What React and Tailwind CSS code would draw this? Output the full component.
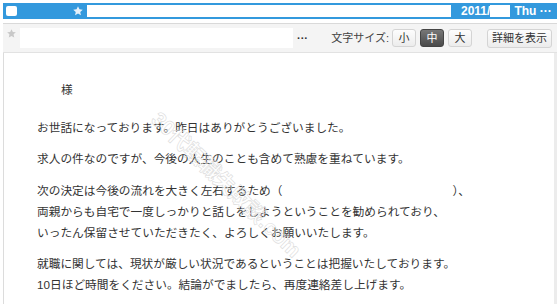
import React from 'react'

const font = { fontFamily: '"Liberation Sans", "Noto Sans CJK JP", sans-serif' }

function Star({ className }) {
  return (
    <svg viewBox="0 0 24 24" className={className} fill="currentColor">
      <path d="M12 2.5l2.9 6.2 6.6.7-5 4.5 1.4 6.6L12 17.2l-5.9 3.3 1.4-6.6-5-4.5 6.6-.7z" />
    </svg>
  )
}

function SizeButton({ label, active }) {
  return (
    <div
      className={
        active
          ? 'w-[24px] h-[18px] flex items-center justify-center rounded-[3px] bg-gradient-to-b from-[#777] to-[#4a4a4a] text-white text-[11px] border border-[#444]'
          : 'w-[24px] h-[18px] flex items-center justify-center rounded-[3px] bg-gradient-to-b from-[#fdfdfd] to-[#ececec] text-[#333] text-[11px] border border-[#d4d4d4]'
      }
    >
      {label}
    </div>
  )
}

function App() {
  const lines = [
    { t: 'お世話になっております。昨日はありがとうございました。', mt: 'mt-[17px]' },
    { t: '求人の件なのですが、今後の人生のことも含めて熟慮を重ねています。', mt: 'mt-[10px]' },
    {
      t: (
        <>
          次の決定は今後の流れを大きく左右するため（<span className="inline-block w-[170px]" />）、
        </>
      ),
      mt: 'mt-[11px]',
    },
    { t: '両親からも自宅で一度しっかりと話しをしようということを勧められており、', mt: '' },
    { t: 'いったん保留させていただきたく、よろしくお願いいたします。', mt: '' },
    { t: '就職に関しては、現状が厳しい状況であるということは把握いたしております。', mt: 'mt-[10px]' },
    { t: '10日ほど時間をください。結論がでましたら、再度連絡差し上げます。', mt: '' },
  ]

  return (
    <div className="w-[560px] h-[304px] bg-white overflow-hidden" style={font}>
      <div className="px-[3px] pt-[3px]">
        {/* selected header row */}
        <div className="h-[16px] bg-[#3399dd] flex items-center whitespace-nowrap">
          <div className="shrink-0 ml-[3px] w-[11px] h-[10px] bg-white rounded-[2px]" />
          <Star className="shrink-0 ml-[55px] w-[12px] h-[12px] text-[#e6f1fa]" />
          <div className="shrink-0 ml-[3px] w-[364px] h-[12px] bg-white" />
          <div className="shrink-0 ml-[10px] text-white text-[12px] font-bold leading-none">2011/</div>
          <div className="shrink-0 w-[20px] h-[12px] bg-white" />
          <div className="shrink-0 ml-[4px] text-white text-[12px] font-bold leading-none">Thu ···</div>
        </div>

        {/* toolbar row */}
        <div className="mt-[4px] border-t border-[#d9d9d9] border-b border-b-[#e2e2e2] bg-[#f4f4f4] h-[30px] flex items-center whitespace-nowrap">
          <div className="w-[17px] h-full flex items-start justify-center pt-[4px]">
            <Star className="w-[11px] h-[11px] text-[#c8c8c8]" />
          </div>
          <div className="w-[273px] h-[20px] bg-white" />
          <div className="ml-[4px] text-[#333] text-[11px] font-bold leading-none">···</div>
          <div className="ml-auto flex items-center">
            <span className="text-[11px] text-[#444] mr-[3px]">文字サイズ:</span>
            <div className="flex gap-[4px]">
              <SizeButton label="小" />
              <SizeButton label="中" active />
              <SizeButton label="大" />
            </div>
            <div className="ml-[15px] mr-[5px] h-[19px] px-[4px] flex items-center rounded-[3px] border border-[#d4d4d4] bg-gradient-to-b from-[#fdfdfd] to-[#ececec] text-[11px] text-[#333]">
              詳細を表示
            </div>
          </div>
        </div>

        {/* body */}
        <div className="relative h-[260px] border-l border-[#dcdcdc] border-r-[3px] border-r-[#ececec] pl-[33px] pt-[26px] text-[11.7px] leading-[21px] text-[#333]">
          <div className="pl-[24px]">様</div>
          {lines.map((l, i) => (
            <div key={i} className={l.mt + ' whitespace-nowrap'}>
              {l.t}
            </div>
          ))}
          {/* faint diagonal watermark */}
          <svg className="pointer-events-none absolute left-0 top-0 w-[540px] h-[260px]" viewBox="0 0 540 260">
            <text
              x="0"
              y="0"
              transform="translate(146 68) rotate(44)"
              fontSize="21"
              fontWeight="bold"
              fill="none"
              stroke="#dcdcdc"
              strokeWidth="0.6"
              fontFamily='"Liberation Sans", "Noto Sans CJK JP", sans-serif'
            >
              30代転職失敗談.com
            </text>
          </svg>
        </div>
      </div>
    </div>
  )
}

export default App
